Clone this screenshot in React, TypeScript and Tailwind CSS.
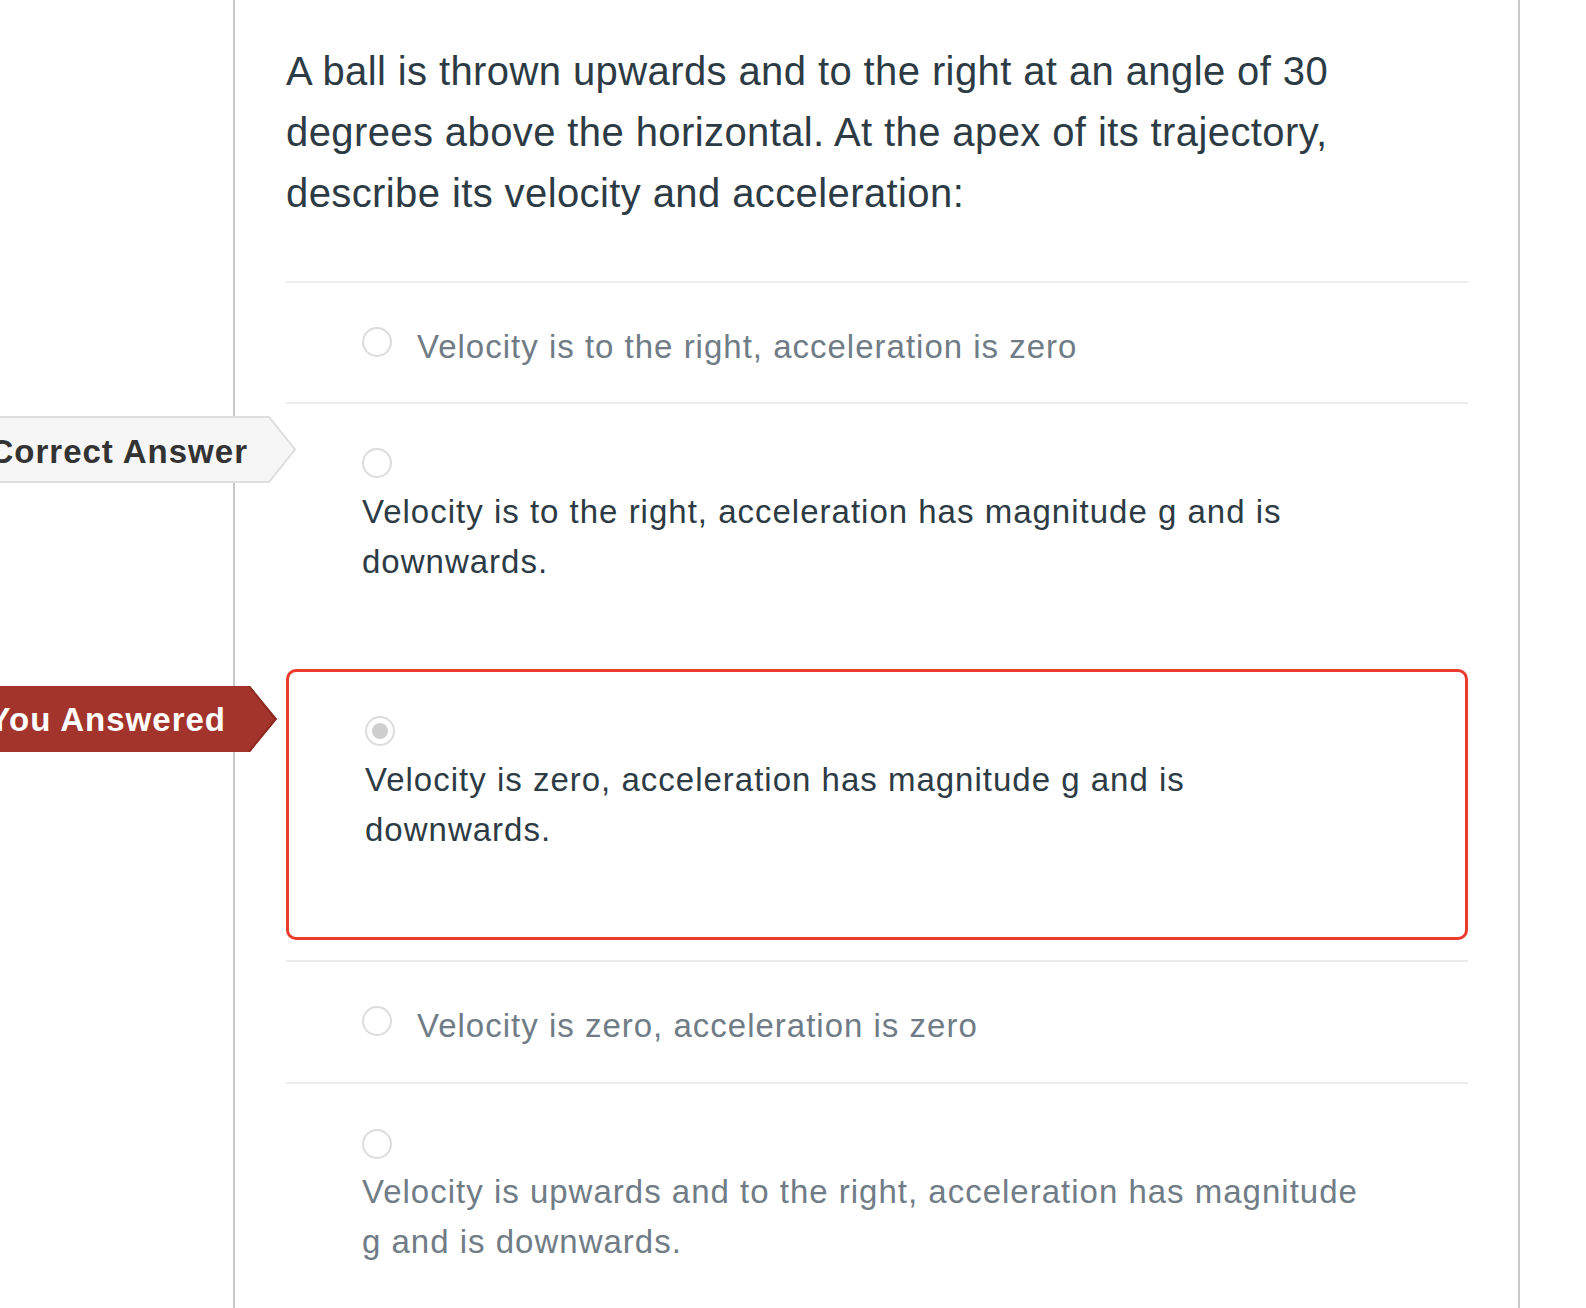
import React from "react";

const font = { fontFamily: '"Liberation Sans", Arial, sans-serif' };

function Radio({ selected = false, className = "" }: { selected?: boolean; className?: string }) {
  return (
    <span className={"relative block h-[30px] w-[30px] shrink-0 rounded-full border-2 border-[#dcdcdc] bg-white " + className}>
      {selected && (
        <span className="absolute left-[5px] top-[5px] h-4 w-4 rounded-full bg-[#cfcfcf]" />
      )}
    </span>
  );
}

function CorrectLabel() {
  return (
    <div className="absolute left-[-319px] top-[12px] h-[67px] w-[330px]">
      <svg className="absolute inset-0" width="330" height="67" viewBox="0 0 330 67">
        <polygon points="0,1 302,1 328,33.5 302,66 0,66" fill="#f6f6f6" stroke="#dedede" strokeWidth="2" />
      </svg>
      <div className="relative flex h-full items-center justify-end pt-[5px] pr-[49px] text-[33px] font-bold text-[#333] whitespace-nowrap" style={font}>
        Correct Answer
      </div>
    </div>
  );
}

function AnsweredLabel() {
  return (
    <div className="absolute left-[-342px] top-[14px] h-[66px] w-[330px]">
      <svg className="absolute inset-0" width="330" height="66" viewBox="0 0 330 66">
        <polygon points="0,0 303,0 330,33 303,66 0,66" fill="#a3342b" />
        <polygon points="301,0 303,0 330,33 303,66 301,66 327,33" fill="#8e2a22" />
      </svg>
      <div className="relative flex h-full items-center justify-end pt-[2px] pr-[51px] text-[33px] font-bold text-white whitespace-nowrap" style={font}>
        You Answered
      </div>
    </div>
  );
}

const ans = "text-[33px] leading-[50px] tracking-[1px]";

export default function App() {
  return (
    <div className="flex h-[1308px] w-[1586px] overflow-hidden bg-white" style={font}>
      <div className="w-[233px] shrink-0" />
      <div className="flex-1 max-w-[1287px] border-x-2 border-[#c9c9c9] pl-[51px] pr-[50px] pt-[41px]">
        <div className="text-[40px] leading-[61px] tracking-[0.4px] text-[#2d3b45] pr-[100px]">
          A ball is thrown upwards and to the right at an angle of 30 degrees above the horizontal. At the apex of its trajectory, describe its velocity and acceleration:
        </div>
        <div className="mt-[57px] border-t-2 border-[#ececec]">
          {/* Row 1 */}
          <div className={"flex items-start gap-[25px] pl-[76px] pt-[39px] pb-[30px] text-[#707c86] " + ans}>
            <Radio className="mt-[5px]" />
            <span>Velocity is to the right, acceleration is zero</span>
          </div>
          {/* Row 2 */}
          <div className={"relative border-t-2 border-[#ececec] pl-[76px] pt-[44px] pb-[82px] text-[#2d3b45] " + ans}>
            <CorrectLabel />
            <Radio />
            <div className="mt-[9px] w-[1020px]">
              Velocity is to the right, acceleration has magnitude g and is downwards.
            </div>
          </div>
          {/* Row 3 selected */}
          <div className={"relative rounded-[10px] border-[3px] border-[#ec3a2c] pl-[76px] pt-[44px] pb-[82px] text-[#2d3b45] " + ans}>
            <AnsweredLabel />
            <Radio selected />
            <div className="mt-[9px] w-[990px]">
              Velocity is zero, acceleration has magnitude g and is downwards.
            </div>
          </div>
          {/* Row 4 */}
          <div className={"mt-[20px] flex items-start gap-[25px] border-t-2 border-[#ececec] pl-[76px] pt-[39px] pb-[31px] text-[#707c86] " + ans}>
            <Radio className="mt-[5px]" />
            <span>Velocity is zero, acceleration is zero</span>
          </div>
          {/* Row 5 */}
          <div className={"relative border-t-2 border-[#ececec] pl-[76px] pt-[45px] pb-[40px] text-[#707c86] " + ans}>
            <Radio />
            <div className="mt-[8px] w-[1020px]">
              Velocity is upwards and to the right, acceleration has magnitude g and is downwards.
            </div>
          </div>
        </div>
      </div>
    </div>
  );
}
